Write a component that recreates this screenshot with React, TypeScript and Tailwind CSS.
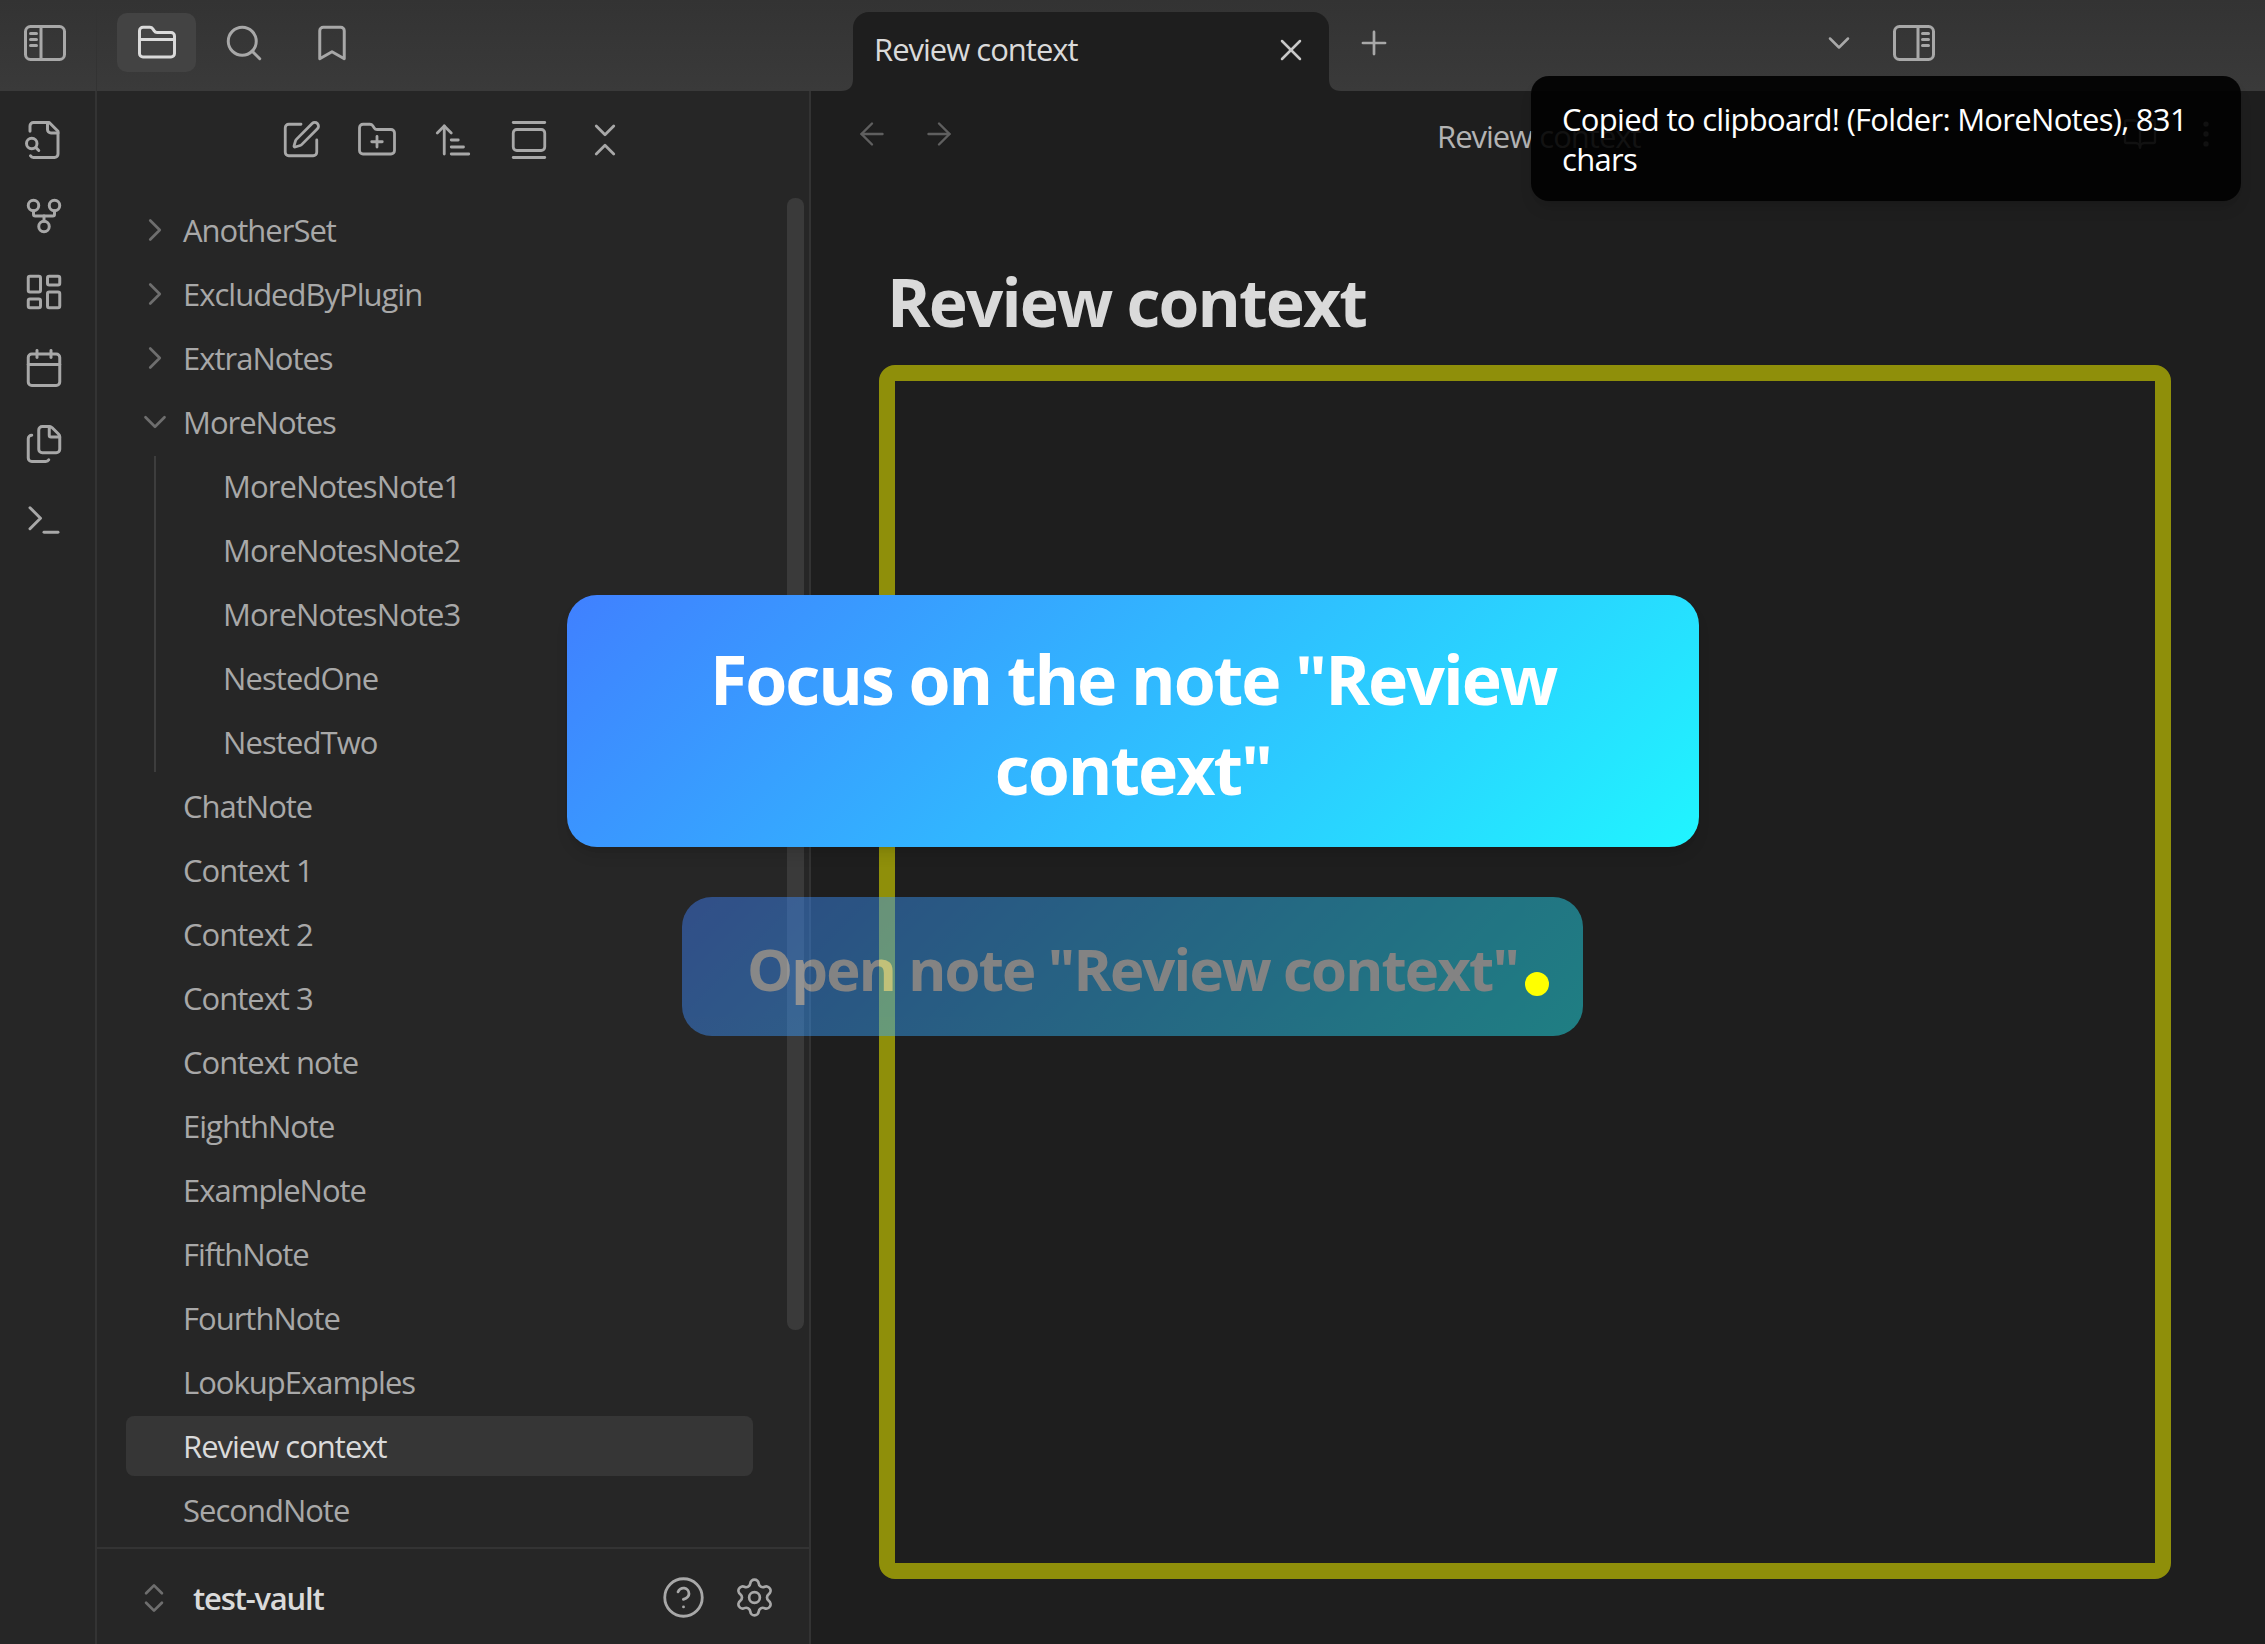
import {
  ArrowLeft,
  ArrowRight,
  ArrowUpNarrowWide,
  Bookmark,
  BookOpen,
  Calendar,
  ChevronDown,
  ChevronRight,
  ChevronsDownUp,
  ChevronsUpDown,
  CircleHelp,
  EllipsisVertical,
  Files,
  FolderClosed,
  FolderPlus,
  GalleryVertical,
  GitFork,
  LayoutDashboard,
  Plus,
  Search,
  Settings,
  SquarePen,
  Terminal,
  X,
} from "lucide-react";

function SidebarToggle({ flip }: { flip?: boolean }) {
  return (
    <svg width="44" height="40" viewBox="0 0 44 40" fill="none" stroke="#a8a8a8" strokeWidth="3" strokeLinecap="round" className={flip ? "-scale-x-100" : ""}>
      <rect x="2.5" y="3.5" width="39" height="33" rx="5" />
      <path d="M18 3.5v33" />
      <path d="M7.5 10.5h6M7.5 16.5h6M7.5 22.5h6" />
    </svg>
  );
}

// file with the lens sitting on its lower left corner
function FileLens({ size, strokeWidth }: { size: number; strokeWidth: number }) {
  return (
    <svg width={size} height={size} viewBox="0 0 24 24" fill="none" stroke="currentColor" strokeWidth={strokeWidth} strokeLinecap="round" strokeLinejoin="round">
      <path d="M14 2v4a2 2 0 0 0 2 2h4" />
      <path d="M4.268 21a2 2 0 0 0 1.727 1H18a2 2 0 0 0 2-2V7l-5-5H6a2 2 0 0 0-2 2v3" />
      <path d="m9 18-1.5-1.5" />
      <circle cx="5" cy="14" r="3" />
    </svg>
  );
}

const ribbonIcons = [FileLens, GitFork, LayoutDashboard, Calendar, Files, Terminal];
const toolbarIcons = [SquarePen, FolderPlus, ArrowUpNarrowWide, GalleryVertical, ChevronsDownUp];

const folders = ["AnotherSet", "ExcludedByPlugin", "ExtraNotes"];
const nested = ["MoreNotesNote1", "MoreNotesNote2", "MoreNotesNote3", "NestedOne", "NestedTwo"];
const notes = [
  "ChatNote",
  "Context 1",
  "Context 2",
  "Context 3",
  "Context note",
  "EighthNote",
  "ExampleNote",
  "FifthNote",
  "FourthNote",
  "LookupExamples",
];

function Row({ label, active, children }: { label: string; active?: boolean; children?: React.ReactNode }) {
  return (
    <div className={`h-[60px] w-[627px] flex items-center rounded-[8px] shrink-0 ${active ? "bg-[#363636] text-[#dadada]" : "text-[#a8a8a8]"}`}>
      <div className="w-[57px] shrink-0 flex justify-center">{children}</div>
      <span className="tracking-[-1px]">{label}</span>
    </div>
  );
}

export default function App() {
  return (
    <div className="relative w-[2265px] h-[1644px] overflow-hidden flex flex-col bg-[#1e1e1e] text-[31px] font-['Open_Sans','Noto_Sans',sans-serif]">
      {/* Title bar */}
      <div className="h-[91px] shrink-0 flex items-center pb-[6px] bg-gradient-to-b from-[#333333] to-[#3a3a3a] text-[#a8a8a8]">
        <div className="w-[97px] self-stretch -mb-[6px] pb-[6px] pl-[23px] shrink-0 flex items-center border-r border-[#333333]">
          <SidebarToggle />
        </div>
        <div className="flex items-center w-[763px] shrink-0 ml-[20px]">
          <div className="w-[79px] h-[59px] rounded-[10px] bg-[#434343] flex items-center justify-center text-[#dadada]">
            <FolderClosed size={42} strokeWidth={1.7} />
          </div>
          <Search size={42} strokeWidth={1.7} className="ml-[27px]" />
          <Bookmark size={42} strokeWidth={1.7} className="ml-[46px]" />
        </div>
        <div className="relative self-end w-[476px] h-[79px] -ml-[27px] -mb-[6px] bg-[#1e1e1e] rounded-t-[16px] flex items-center pl-[21px] pr-[20px] pb-[4px] text-[#dadada] shrink-0">
          <svg width="12" height="12" viewBox="0 0 12 12" className="absolute bottom-0 -left-[12px]" fill="#1e1e1e">
            <path d="M12 0v12H0C8 12 12 8 12 0z" />
          </svg>
          <svg width="12" height="12" viewBox="0 0 12 12" className="absolute bottom-0 -right-[12px]" fill="#1e1e1e">
            <path d="M0 0v12h12C4 12 0 8 0 0z" />
          </svg>
          <span className="flex-1 tracking-[-1px]">Review context</span>
          <X size={36} strokeWidth={1.7} className="text-[#c8c8c8]" />
        </div>
        <Plus size={38} strokeWidth={1.7} className="ml-[26px] shrink-0" />
        <ChevronDown size={36} strokeWidth={1.7} className="ml-[428px] shrink-0" />
        <div className="ml-[35px] shrink-0">
          <SidebarToggle flip />
        </div>
      </div>

      <div className="flex-1 flex min-h-0">
        {/* Ribbon */}
        <div className="w-[97px] shrink-0 bg-[#262626] border-r-2 border-[#333333] flex flex-col items-center pt-[28px] pr-[8px] gap-[34px] text-[#a8a8a8]">
          {ribbonIcons.map((Icon, i) => (
            <Icon key={i} size={42} strokeWidth={1.7} />
          ))}
        </div>

        {/* File explorer */}
        <div className="relative w-[714px] shrink-0 bg-[#262626] border-r-2 border-[#333333] flex flex-col">
          <div className="h-[98px] shrink-0 flex items-center justify-center gap-[34px] text-[#a8a8a8]">
            {toolbarIcons.map((Icon, i) => (
              <Icon key={i} size={42} strokeWidth={1.6} />
            ))}
          </div>
          <div className="flex-1 min-h-0 overflow-hidden pt-[11px] pl-[29px] flex flex-col gap-[4px]">
            {folders.map((f) => (
              <Row key={f} label={f}>
                <ChevronRight size={38} strokeWidth={1.7} className="text-[#6e6e6e]" />
              </Row>
            ))}
            <Row label="MoreNotes">
              <ChevronDown size={38} strokeWidth={1.7} className="text-[#6e6e6e]" />
            </Row>
            <div className="ml-[28px] border-l-2 border-[#3d3d3d] pl-[67px] flex flex-col gap-[4px] shrink-0">
              {nested.map((n) => (
                <div key={n} className="h-[60px] flex items-center text-[#a8a8a8] tracking-[-0.9px]">
                  {n}
                </div>
              ))}
            </div>
            {notes.map((n) => (
              <Row key={n} label={n} />
            ))}
            <Row label="Review context" active />
            <Row label="SecondNote" />
          </div>
          <div className="h-[97px] shrink-0 border-t-2 border-[#333333] flex items-center pl-[38px] pr-[33px] pt-[2px] text-[#a8a8a8]">
            <ChevronsUpDown size={38} strokeWidth={1.7} className="text-[#6e6e6e]" />
            <span className="ml-[20px] flex-1 pt-[2px] font-semibold text-[#dadada] tracking-[-1.2px]">test-vault</span>
            <CircleHelp size={45} strokeWidth={1.5} />
            <Settings size={43} strokeWidth={1.5} className="ml-[27px]" />
          </div>
          {/* Scrollbar */}
          <div className="absolute left-[690px] top-[107px] w-[17px] h-[1132px] rounded-[8px] bg-[#3a3a3a]" />
        </div>

        {/* Main note */}
        <div className="flex-1 min-w-0 flex flex-col">
          <div className="h-[86px] shrink-0 flex items-center pl-[43px] pr-[42px] text-[#5f5f5f]">
            <ArrowLeft size={36} strokeWidth={1.6} />
            <ArrowRight size={36} strokeWidth={1.6} className="ml-[31px]" />
            <span className="ml-[480px] pt-[5px] flex-1 text-[#b3b3b3] tracking-[-1px]">Review context</span>
            <BookOpen size={36} strokeWidth={1.6} className="text-[#a8a8a8]" />
            <EllipsisVertical size={34} strokeWidth={1.8} className="ml-[31px] text-[#a8a8a8]" />
          </div>
          <h1 className="mt-[85px] ml-[76px] h-[78px] flex items-center text-[66px] font-bold text-[#dadada] tracking-[-1.9px]">
            Review context
          </h1>
          <div className="mt-[25px] ml-[68px] w-[1292px] h-[1214px] border-[16px] border-[#8f8f0a] rounded-[16px]" />
        </div>
      </div>

      {/* Toast */}
      <div className="absolute left-[1531px] top-[76px] w-[710px] h-[125px] rounded-[18px] bg-black/90 shadow-lg pl-[31px] pr-[20px] flex items-center text-white leading-[40px] tracking-[-0.7px]">
        <div>Copied to clipboard! (Folder: MoreNotes), 831 chars</div>
      </div>

      {/* Focus banner */}
      <div className="absolute left-[567px] top-[595px] w-[1132px] h-[252px] rounded-[30px] bg-[linear-gradient(135deg,#4080ff,#20f5ff)] shadow-lg flex items-center justify-center text-center text-white text-[68px] font-bold leading-[90px] px-[120px] pt-[6px] tracking-[-2px]">
        Focus on the note "Review context"
      </div>

      {/* Click target */}
      <div className="absolute left-[682px] top-[897px] w-[901px] h-[139px] rounded-[30px] bg-[linear-gradient(135deg,#4080ff,#20f5ff)] opacity-45 flex items-center justify-center pt-[4px] text-white text-[58px] font-bold tracking-[-1.8px]">
        Open note "Review context"
      </div>
      <div className="absolute left-[1525px] top-[972px] w-[24px] h-[24px] rounded-full bg-[#ffff00]" />
    </div>
  );
}
